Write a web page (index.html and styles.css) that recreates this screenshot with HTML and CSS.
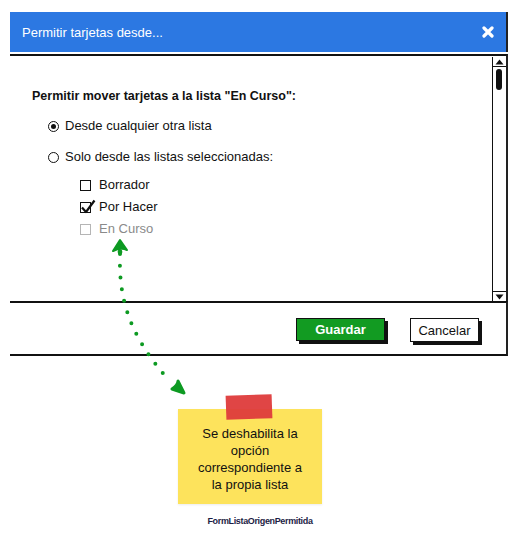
FILE: index.html
```html
<!DOCTYPE html>
<html lang="es">
<head>
<meta charset="utf-8">
<link rel="stylesheet" href="styles.css">
</head>
<body>
<div class="page">
  <div class="dialog">
    <div class="titlebar">
      <span class="title">Permitir tarjetas desde...</span>
      <svg class="close" width="12" height="12" viewBox="0 0 12 12"><path d="M2 2 L10 10 M10 2 L2 10" stroke="#fff" stroke-width="3.2" stroke-linecap="round"/></svg>
    </div>
    <div class="content">
      <div class="form">
        <div class="heading">Permitir mover tarjetas a la lista "En Curso":</div>
        <div class="radio-row first"><span class="radio on"></span><span>Desde cualquier otra lista</span></div>
        <div class="radio-row second"><span class="radio"></span><span>Solo desde las listas seleccionadas:</span></div>
        <div class="checks">
          <div class="check-row"><span class="box"></span><span>Borrador</span></div>
          <div class="check-row"><span class="box"><svg class="tick" width="16" height="16" viewBox="0 0 16 16"><path d="M2 8.5 L6 13 L14.5 1.5" fill="none" stroke="#111" stroke-width="2.2" stroke-linejoin="round"/></svg></span><span>Por Hacer</span></div>
          <div class="check-row disabled"><span class="box"></span><span>En Curso</span></div>
        </div>
      </div>
      <div class="scrollbar">
        <div class="sb-btn"><svg width="9" height="6" viewBox="0 0 9 6"><path d="M0.5 5.5 L4.5 0.5 L8.5 5.5 Z" fill="#111"/></svg></div>
        <div class="sb-track"><div class="sb-thumb"></div></div>
        <div class="sb-btn down"><svg width="9" height="6" viewBox="0 0 9 6"><path d="M0.5 0.5 L4.5 5.5 L8.5 0.5 Z" fill="#111"/></svg></div>
      </div>
    </div>
    <div class="footer">
      <button class="btn primary">Guardar</button>
      <button class="btn">Cancelar</button>
    </div>
  </div>
  <div class="annotation">
    <div class="note">
      <div class="tape"></div>
      <p>Se deshabilita la opción correspondiente a la propia lista</p>
    </div>
    <div class="caption">FormListaOrigenPermitida</div>
  </div>
  <svg class="connector" width="522" height="560" viewBox="0 0 522 560">
    <path d="M120 254 C119 290 124 330 168 379" fill="none" stroke="#0d9a22" stroke-width="4" stroke-linecap="round" stroke-dasharray="0 11.8"/>
    <path d="M120 240 L127 250 Q121 247 113 251 Z" fill="#0d9a22" stroke="#0d9a22" stroke-width="2" stroke-linejoin="round"/>
    <circle cx="120" cy="252" r="2.4" fill="#0d9a22"/>
    <path d="M184 393 L172 389 Q178 385 178 381 Z" fill="#0d9a22" stroke="#0d9a22" stroke-width="3" stroke-linejoin="round"/>
  </svg>
</div>
</body>
</html>
```
FILE: styles.css
```css
html, body {
  margin: 0;
  padding: 0;
  background: #fff;
}
.page {
  position: relative;
  width: 522px;
  height: 560px;
  padding: 12px 0 0 10px;
  box-sizing: border-box;
  font-family: "Liberation Sans", Arial, sans-serif;
  color: #111;
}
.dialog {
  width: 498px;
  display: flex;
  flex-direction: column;
}
.titlebar {
  height: 40px;
  background: #2c78e2;
  border-right: 2px solid #222;
  display: flex;
  align-items: center;
  justify-content: space-between;
  padding: 0 12px 0 12px;
  box-sizing: border-box;
}
.title {
  color: #fff;
  font-size: 13px;
}
.close {
  display: block;
}
.content {
  margin-top: 2px;
  height: 247px;
  border-top: 2px solid #111;
  border-right: 2px solid #222;
  box-sizing: border-box;
  display: flex;
}
.form {
  flex: 1;
  padding: 32px 0 0 22px;
  font-size: 13px;
}
.heading {
  font-weight: bold;
  font-size: 12.5px;
  line-height: 16px;
}
.radio-row, .check-row {
  display: flex;
  align-items: center;
  height: 16px;
  line-height: 16px;
}
.radio-row {
  margin-left: 16px;
  gap: 6px;
}
.radio-row.first { margin-top: 14px; }
.radio-row.second { margin-top: 15px; }
.radio {
  width: 9px;
  height: 9px;
  border: 1.5px solid #111;
  border-radius: 50%;
  display: flex;
  align-items: center;
  justify-content: center;
}
.radio.on::after {
  content: "";
  width: 5px;
  height: 5px;
  border-radius: 50%;
  background: #111;
}
.checks {
  margin: 12px 0 0 48px;
  display: flex;
  flex-direction: column;
  gap: 6px;
}
.check-row {
  gap: 8px;
}
.box {
  position: relative;
  width: 9px;
  height: 9px;
  border: 1.5px solid #111;
}
.tick {
  position: absolute;
  left: -1px;
  top: -4px;
}
.check-row.disabled { color: #8a8a8a; }
.check-row.disabled .box { border-color: #b5b5b5; }
.scrollbar {
  width: 13px;
  border-left: 1.5px solid #111;
  display: flex;
  flex-direction: column;
  margin-top: 1px;
}
.sb-btn {
  height: 9px;
  border-bottom: 1.5px solid #111;
  display: flex;
  align-items: center;
  justify-content: center;
}
.sb-btn.down {
  border-bottom: none;
  border-top: 1.5px solid #111;
}
.sb-track {
  flex: 1;
  padding: 2px 0 0 3px;
}
.sb-thumb {
  width: 6px;
  height: 21px;
  background: #111;
  border-radius: 3px;
}
.footer {
  height: 55px;
  border-top: 2px solid #111;
  border-bottom: 2px solid #111;
  border-right: 2px solid #222;
  box-sizing: border-box;
  display: flex;
  align-items: center;
  justify-content: flex-end;
  gap: 25px;
  padding: 3px 27px 0 0;
}
.btn {
  font-family: "Liberation Sans", Arial, sans-serif;
  font-size: 13px;
  height: 24px;
  padding: 0;
  border: 1.5px solid #111;
  background: #fff;
  color: #111;
  box-shadow: 3px 3px 0 #111;
  width: 69px;
}
.btn.primary {
  width: 89px;
  height: 23px;
  margin-top: -2px;
  background: #129b22;
  color: #fff;
  font-weight: bold;
}
.annotation {
  margin: 39px 0 0 158px;
  width: 164px;
  display: flex;
  flex-direction: column;
  align-items: center;
}
.note {
  position: relative;
  width: 144px;
  height: 95px;
  margin-top: 14px;
  background: #fde35c;
  box-shadow: 0 1px 2px rgba(0,0,0,0.08);
  display: flex;
  align-items: center;
  justify-content: center;
}
.note p {
  margin: 4px 0 0;
  text-align: center;
  font-size: 13px;
  line-height: 17px;
  width: 114px;
}
.tape {
  position: absolute;
  left: 48px;
  top: -14px;
  width: 46px;
  height: 24px;
  background: #de3b3b;
  transform: rotate(-2deg);
  opacity: 0.95;
}
.caption {
  margin: 12px 0 0 20px;
  font-size: 9px;
  font-weight: bold;
  letter-spacing: -0.35px;
  color: #1d1d45;
}
.connector {
  position: absolute;
  left: 0;
  top: 0;
  pointer-events: none;
}
```
